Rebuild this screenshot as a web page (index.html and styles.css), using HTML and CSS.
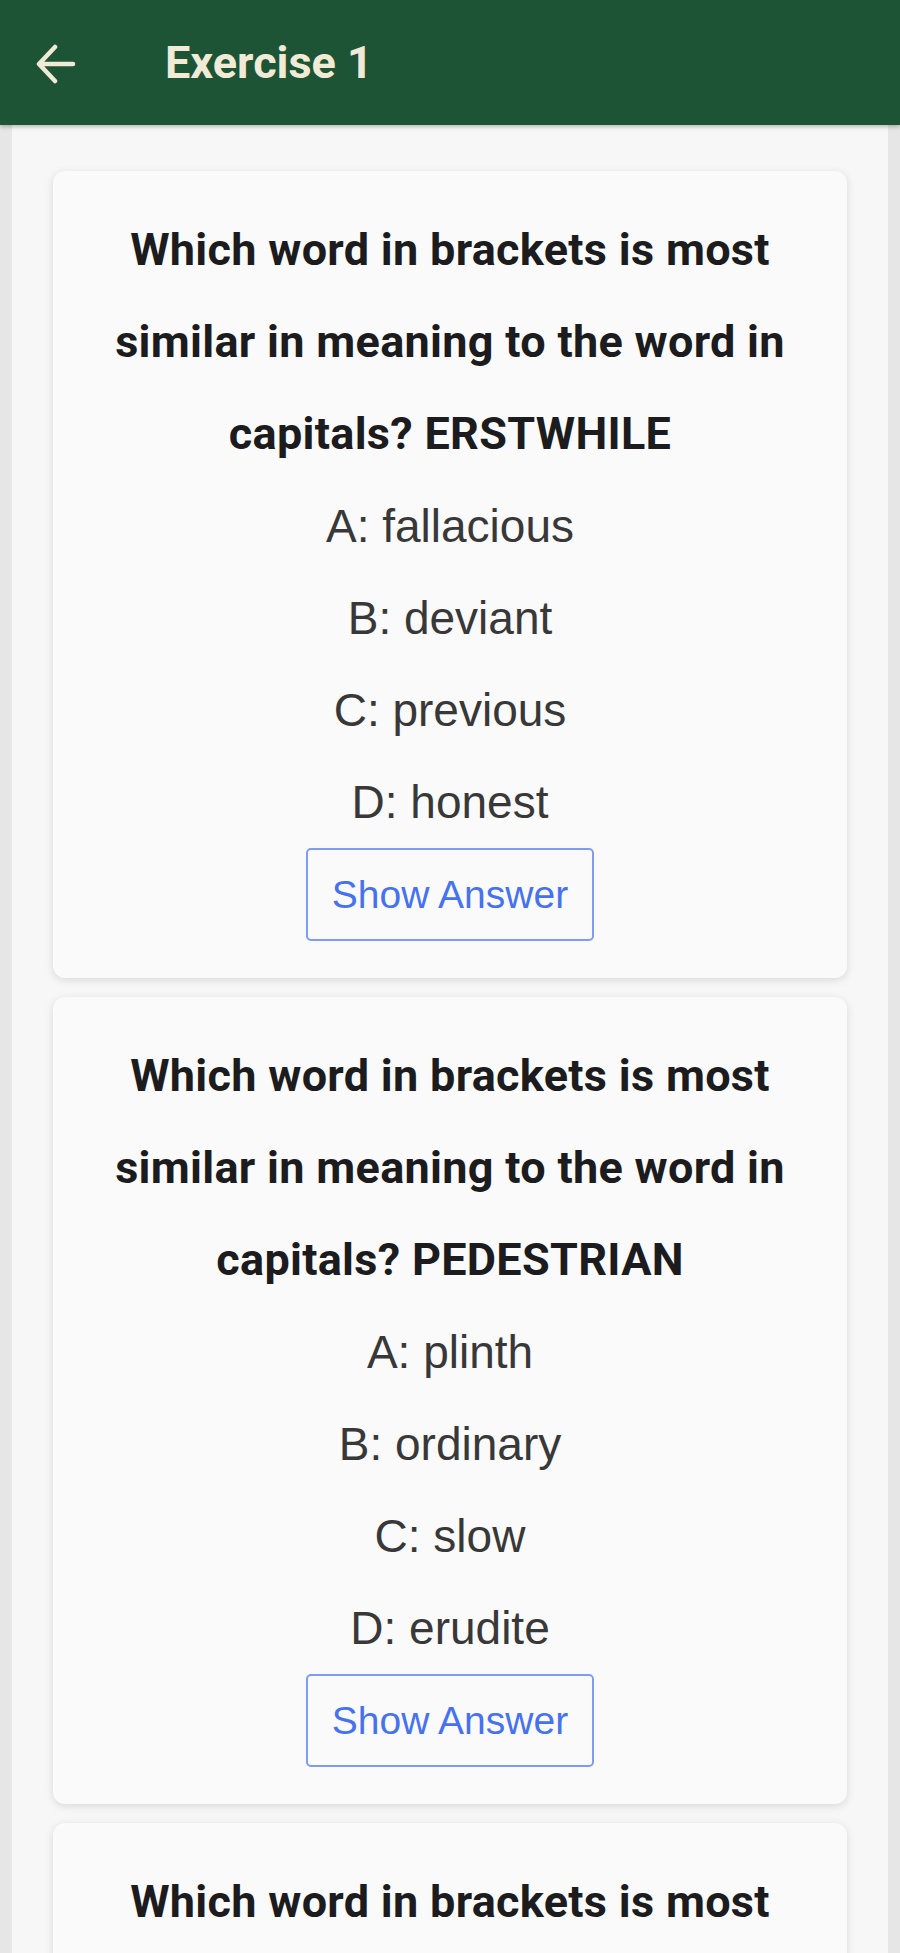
FILE: index.html
```html
<!DOCTYPE html>
<html>
<head>
<meta charset="utf-8">
<link rel="stylesheet" href="styles.css">
</head>
<body>
<header class="appbar">
  <svg class="back" width="40" height="40" viewBox="0 0 40 40" aria-hidden="true">
    <path d="M37 20H4M19 3L3 20L19 37" fill="none" stroke="#f1ead6" stroke-width="4.5" stroke-linecap="round" stroke-linejoin="round"/>
  </svg>
  <h1 class="title">Exercise 1</h1>
</header>
<main class="page">
  <section class="card">
    <p class="question">Which word in brackets is most similar in meaning to the word in capitals? ERSTWHILE</p>
    <p class="option">A: fallacious</p>
    <p class="option">B: deviant</p>
    <p class="option">C: previous</p>
    <p class="option">D: honest</p>
    <button class="answer-btn">Show Answer</button>
  </section>
  <section class="card">
    <p class="question">Which word in brackets is most similar in meaning to the word in capitals? PEDESTRIAN</p>
    <p class="option">A: plinth</p>
    <p class="option">B: ordinary</p>
    <p class="option">C: slow</p>
    <p class="option">D: erudite</p>
    <button class="answer-btn">Show Answer</button>
  </section>
  <section class="card">
    <p class="question">Which word in brackets is most similar in meaning to the word in capitals? OBDURATE</p>
    <p class="option">A: stubborn</p>
    <p class="option">B: hidden</p>
    <p class="option">C: cruel</p>
    <p class="option">D: obvious</p>
    <button class="answer-btn">Show Answer</button>
  </section>
</main>
</body>
</html>
```
FILE: styles.css
```css
html, body {
  margin: 0;
  padding: 0;
}
body {
  background: #e6e6e6;
  font-family: Roboto, "Liberation Sans", sans-serif;
  height: 1953px;
  overflow: hidden;
}
.appbar {
  height: 125px;
  background: #1c5435;
  display: flex;
  align-items: center;
  padding-left: 36px;
  box-shadow: 0 2px 4px rgba(0,0,0,0.25);
  position: relative;
  z-index: 2;
}
.back {
  display: block;
  margin-top: 2px;
}
.title {
  margin: 0 0 0 89px;
  color: #f1ead6;
  font-family: Roboto, sans-serif;
  font-weight: 700;
  font-size: 45px;
  letter-spacing: 0;
}
.page {
  margin: 0 12px;
  background: #f7f7f7;
  padding: 46px 41px;
  display: flex;
  flex-direction: column;
  gap: 19px;
  min-height: 1900px;
}
.card {
  background: #fafafa;
  border-radius: 12px;
  box-shadow: 0 2px 9px rgba(0,0,0,0.13);
  padding: 33px 44px 37px;
  display: flex;
  flex-direction: column;
  align-items: center;
  text-align: center;
}
.question {
  margin: 0;
  font-family: Roboto, sans-serif;
  font-weight: 700;
  font-size: 45px;
  letter-spacing: 0.3px;
  line-height: 92px;
  color: #1c1c1e;
}
.option {
  margin: 0;
  font-family: "Liberation Sans", Arial, sans-serif;
  font-size: 46px;
  line-height: 92px;
  color: #383838;
}
.answer-btn {
  width: 288px;
  height: 93px;
  background: transparent;
  border: 2px solid #7e9cf4;
  border-radius: 5px;
  color: #4672ef;
  font-family: "Liberation Sans", Arial, sans-serif;
  font-size: 39px;
  padding: 0;
}
```
